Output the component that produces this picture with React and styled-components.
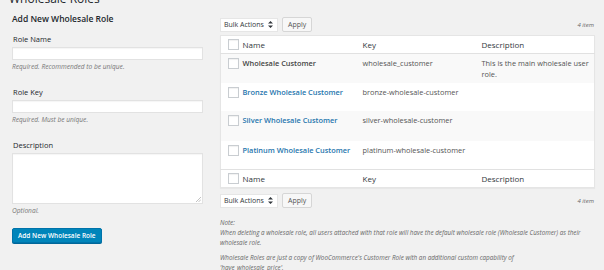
import React from "react";
import styled, { createGlobalStyle } from "styled-components";

const GlobalStyle = createGlobalStyle`
  html, body {
    margin: 0;
    background: #f1f1f1;
    font-family: "Open Sans", "Liberation Sans", sans-serif;
    color: #444;
    overflow: hidden;
  }
`;

const Page = styled.div`
  padding: 0 9px 0 12px;
`;

const Title = styled.h1`
  margin: -8px 0 0 -3px;
  font-size: 12px;
  line-height: 14px;
  font-weight: 400;
  color: #23282d;
`;

const Columns = styled.div`
  display: flex;
  gap: 17px;
  align-items: flex-start;
`;

const FormColumn = styled.div`
  width: 191px;
  flex: none;
`;

const FormTitle = styled.h2`
  margin: 7px 0 9px;
  font-size: 8.5px;
  line-height: 12px;
  font-weight: 600;
  color: #23282d;
`;

const Field = styled.div`
  display: flex;
  flex-direction: column;
  margin-bottom: ${(p) => p.$gap ?? 15}px;
`;

const Label = styled.label`
  font-size: 7.5px;
  line-height: 11px;
  color: #23282d;
  padding-left: 1px;
`;

const TextInput = styled.div`
  margin-top: 2px;
  height: ${(p) => p.$h || 13}px;
  box-sizing: border-box;
  background: #fff;
  border: 1px solid #e2e2e2;
  box-shadow: inset 0 1px 1px rgba(0, 0, 0, 0.04);
  position: relative;
`;

const Grip = styled.svg`
  position: absolute;
  right: 1px;
  bottom: 1px;
`;

const Help = styled.p`
  margin: 2px 0 0;
  font-size: 6.6px;
  line-height: 10px;
  font-style: italic;
  color: #777;
`;

const PrimaryButton = styled.button`
  display: block;
  margin-top: 12px;
  height: 15px;
  padding: 0 5px;
  border: 1px solid #0073aa;
  border-radius: 2px;
  background: #0085ba;
  color: #fff;
  font-family: inherit;
  font-size: 6.5px;
  font-weight: 600;
  line-height: 13px;
  box-shadow: 0 1px 0 #006799;
`;

const ListColumn = styled.div`
  flex: 1;
  min-width: 0;
`;

const Toolbar = styled.div`
  display: flex;
  align-items: center;
  gap: 4px;
  height: 15px;
  margin-top: ${(p) => p.$top}px;
`;

const Select = styled.div`
  display: flex;
  align-items: center;
  justify-content: space-between;
  width: 58px;
  height: 14px;
  box-sizing: border-box;
  padding: 0 4px 0 3px;
  background: #fff;
  border: 1px solid #e6e6e6;
  font-size: 7px;
  color: #32373c;
`;

const Button = styled.div`
  height: 15px;
  box-sizing: border-box;
  padding: 0 5px;
  display: flex;
  align-items: center;
  background: #f7f7f7;
  border: 1px solid #d6d6d6;
  border-radius: 2px;
  font-size: 7px;
  color: #555;
`;

const Count = styled.span`
  margin-left: auto;
  margin-right: 1px;
  font-size: 6px;
  font-style: italic;
  color: #666;
`;

const Table = styled.table`
  width: 100%;
  margin-top: 3px;
  border-collapse: collapse;
  table-layout: fixed;
  background: #fff;
  border: 1px solid #e5e5e5;
  box-shadow: 0 1px 1px rgba(0, 0, 0, 0.04);
`;

const Row = styled.tr`
  background: ${(p) => (p.$striped ? "#f9f9f9" : "#fff")};
  height: ${(p) => p.$h}px;
`;

const HeadCell = styled.th`
  padding: 0 5px;
  text-align: left;
  font-size: 8px;
  font-weight: 400;
  color: #32373c;
  border-${(p) => p.$edge}: 1px solid #e1e1e1;
`;

const Cell = styled.td`
  vertical-align: top;
  padding: 4px 5px 0;
  font-size: 7.4px;
  line-height: 11px;
  color: #555;
`;

const CheckCell = styled.td`
  vertical-align: ${(p) => (p.$top ? "top" : "middle")};
  padding: ${(p) => (p.$top ? "4px 0 0 7px" : "0 0 0 7px")};
  border-${(p) => p.$edge}: 1px solid #e1e1e1;
`;

const Check = styled.span`
  display: block;
  width: 11px;
  height: 11px;
  box-sizing: border-box;
  background: #fff;
  border: 1px solid #c9cdd1;
  box-shadow: inset 0 1px 1px rgba(0, 0, 0, 0.06);
`;

const RoleName = styled.span`
  font-weight: 600;
  color: ${(p) => (p.$link ? "#1e75ad" : "#444")};
`;

const Notes = styled.div`
  margin-top: 10px;
  font-size: 6.3px;
  line-height: 10px;
  font-style: italic;
  color: #666;
`;

const NoteText = styled.p`
  margin: 0 0 ${(p) => p.$gap ?? 5}px;
`;

const SortArrows = () => (
  <svg width="5" height="7" viewBox="0 0 5 7">
    <path d="M2.5 0 L5 2.6 H0 Z M2.5 7 L5 4.4 H0 Z" fill="#32373c" />
  </svg>
);

const roles = [
  { name: "Wholesale Customer", key: "wholesale_customer", desc: "This is the main wholesale user role.", link: false },
  { name: "Bronze Wholesale Customer", key: "bronze-wholesale-customer", desc: "", link: true },
  { name: "Silver Wholesale Customer", key: "silver-wholesale-customer", desc: "", link: true },
  { name: "Platinum Wholesale Customer", key: "platinum-wholesale-customer", desc: "", link: true },
];

const rowHeights = [29, 28, 30, 29];

const ListToolbar = ({ top }) => (
  <Toolbar $top={top}>
    <Select>
      Bulk Actions
      <SortArrows />
    </Select>
    <Button>Apply</Button>
    <Count>4 item</Count>
  </Toolbar>
);

const HeaderRow = ({ edge }) => (
  <Row $h={18}>
    <CheckCell as="th" $edge={edge}>
      <Check />
    </CheckCell>
    <HeadCell $edge={edge}>Name</HeadCell>
    <HeadCell $edge={edge}>Key</HeadCell>
    <HeadCell $edge={edge}>Description</HeadCell>
  </Row>
);

export default function App() {
  return (
    <Page>
      <GlobalStyle />
      <Title>Wholesale Roles</Title>
      <Columns>
        <FormColumn>
          <FormTitle>Add New Wholesale Role</FormTitle>
          <Field>
            <Label>Role Name</Label>
            <TextInput />
            <Help>Required. Recommended to be unique.</Help>
          </Field>
          <Field>
            <Label>Role Key</Label>
            <TextInput />
            <Help>Required. Must be unique.</Help>
          </Field>
          <Field $gap={0}>
            <Label>Description</Label>
            <TextInput $h={51}>
              <Grip width="5" height="5" viewBox="0 0 5 5">
                <path d="M5 0 L0 5 M5 2.5 L2.5 5" stroke="#999" strokeWidth="0.6" />
              </Grip>
            </TextInput>
            <Help>Optional.</Help>
          </Field>
          <PrimaryButton>Add New Wholesale Role</PrimaryButton>
        </FormColumn>

        <ListColumn>
          <ListToolbar top={11} />
          <Table>
            <colgroup>
              <col style={{ width: 17 }} />
              <col style={{ width: 120 }} />
              <col style={{ width: 119 }} />
              <col />
            </colgroup>
            <thead>
              <HeaderRow edge="bottom" />
            </thead>
            <tbody>
              {roles.map((r, i) => (
                <Row key={r.key} $striped={i % 2 === 0} $h={rowHeights[i]}>
                  <CheckCell $top>
                    <Check />
                  </CheckCell>
                  <Cell>
                    <RoleName $link={r.link}>{r.name}</RoleName>
                  </Cell>
                  <Cell>{r.key}</Cell>
                  <Cell>{r.desc}</Cell>
                </Row>
              ))}
            </tbody>
            <tfoot>
              <HeaderRow edge="top" />
            </tfoot>
          </Table>
          <ListToolbar top={5} />
          <Notes>
            <NoteText $gap={0}>Note:</NoteText>
            <NoteText>
              When deleting a wholesale role, all users attached with that role will have the default
              wholesale role (Wholesale Customer) as their wholesale role.
            </NoteText>
            <NoteText>
              Wholesale Roles are just a copy of WooCommerce's Customer Role with an additional custom
              capability of
              <br />
              'have_wholesale_price'.
            </NoteText>
          </Notes>
        </ListColumn>
      </Columns>
    </Page>
  );
}
